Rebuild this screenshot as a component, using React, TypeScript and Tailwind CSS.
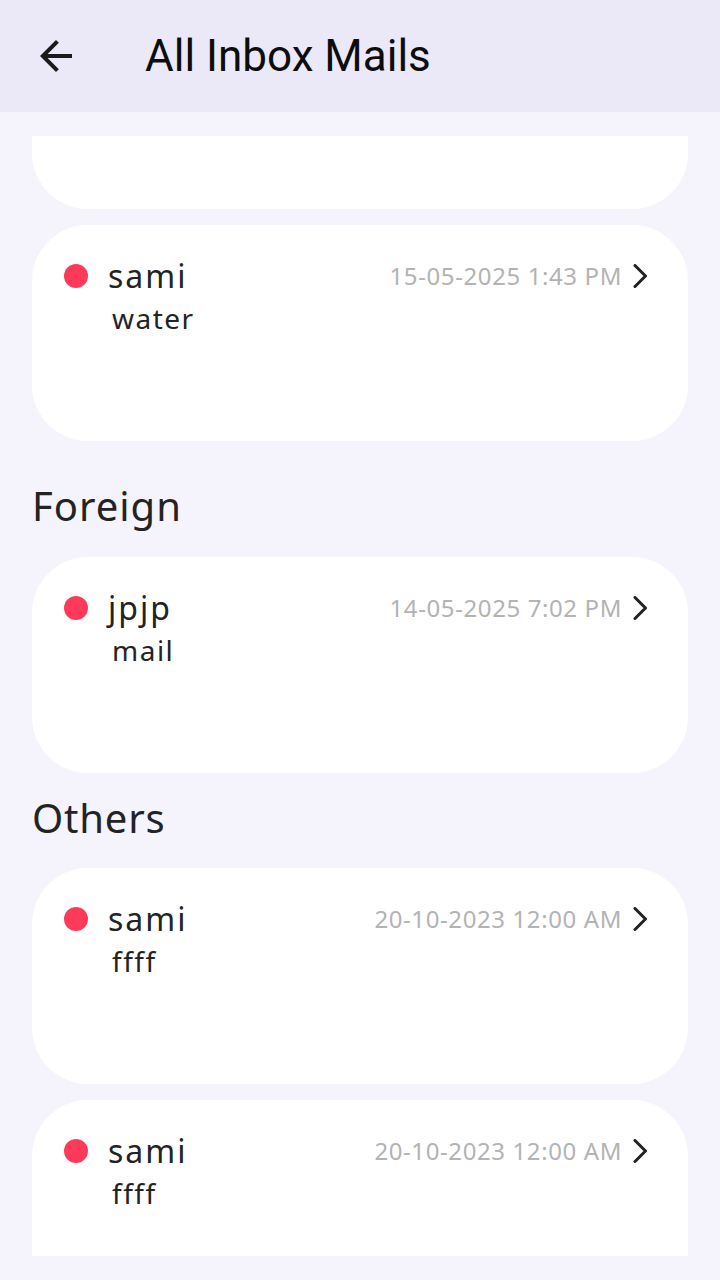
import React from "react";

type Mail = { name: string; subject: string; date: string };

const font = { fontFamily: '"Noto Sans", "Open Sans", sans-serif' };

function Chevron() {
  return (
    <svg width="16" height="24" viewBox="0 0 16 24" className="ml-[10px] shrink-0">
      <polyline points="3,1.5 13.5,12 3,22.5" fill="none" stroke="#222222" strokeWidth="3" strokeLinecap="round" strokeLinejoin="round" />
    </svg>
  );
}

function MailCard({ mail, className = "" }: { mail: Mail; className?: string }) {
  return (
    <div className={`mx-8 h-[216px] shrink-0 rounded-[56px] bg-white pt-[27px] ${className}`}>
      <div className="flex h-[48px] items-center pl-8 pr-[40px]">
        <div className="h-6 w-6 shrink-0 rounded-full bg-[#fe3a5b]" />
        <div className="ml-5 flex-1 text-[32px] leading-[48px] tracking-[2px] text-[#232323]">{mail.name}</div>
        <div className="text-[24px] leading-[48px] tracking-[0.6px] text-[#b3b3b3]">{mail.date}</div>
        <Chevron />
      </div>
      <div className="ml-[80px] text-[28px] leading-[36px] tracking-[1.5px] text-[#232323]">{mail.subject}</div>
    </div>
  );
}

export default function App() {
  const sami1: Mail = { name: "sami", subject: "water", date: "15-05-2025 1:43 PM" };
  const jpjp: Mail = { name: "jpjp", subject: "mail", date: "14-05-2025 7:02 PM" };
  const ffff: Mail = { name: "sami", subject: "ffff", date: "20-10-2023 12:00 AM" };
  return (
    <div className="flex h-[1280px] w-[720px] flex-col bg-[#f5f4fd]" style={font}>
      <div className="flex h-[112px] shrink-0 items-center bg-[#ebe9f7]">
        <div className="ml-8 flex h-12 w-12 items-center justify-center">
          <svg width="48" height="48" viewBox="0 0 24 24">
            <path d="M20 11H7.83l5.59-5.59L12 4l-8 8 8 8 1.41-1.41L7.83 13H20v-2z" fill="#1a1a1a" />
          </svg>
        </div>
        <div
          className="ml-[65px] text-[44px] leading-[52px] text-[#0d0d0d]"
          style={{ fontFamily: 'Roboto, "Noto Sans", sans-serif' }}
        >
          All Inbox Mails
        </div>
      </div>
      <div className="mt-6 h-[1120px] overflow-hidden">
        <div className="-mt-[143px] flex flex-col">
          <MailCard mail={{ name: "sami", subject: "hello", date: "15-05-2025 2:10 PM" }} />
          <MailCard mail={sami1} className="mt-4" />
          <div className="mx-8 mt-[41px] text-[40px] leading-[48px] tracking-[1px] text-[#232323]">Foreign</div>
          <MailCard mail={jpjp} className="mt-[27px]" />
          <div className="mx-8 mt-[21px] text-[40px] leading-[48px] tracking-[0.8px] text-[#232323]">Others</div>
          <MailCard mail={ffff} className="mt-[26px]" />
          <MailCard mail={ffff} className="mt-4" />
        </div>
      </div>
    </div>
  );
}
